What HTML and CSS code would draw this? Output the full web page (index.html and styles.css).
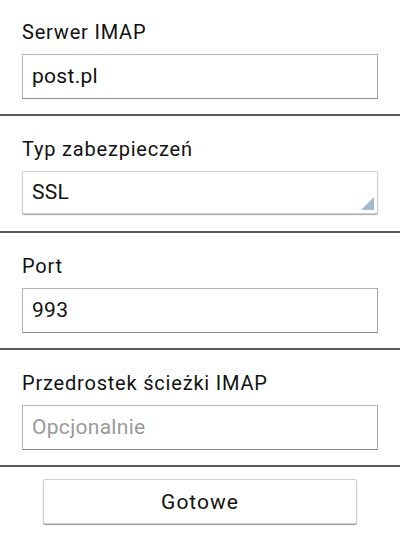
FILE: index.html
```html
<!DOCTYPE html>
<html lang="pl">
<head>
<meta charset="utf-8">
<link rel="stylesheet" href="styles.css">
</head>
<body>
<div class="form">
  <section class="field first">
    <div class="label">Serwer IMAP</div>
    <div class="input">post.pl</div>
  </section>
  <section class="field">
    <div class="label">Typ zabezpieczeń</div>
    <div class="input spinner">SSL<span class="corner"></span></div>
  </section>
  <section class="field">
    <div class="label">Port</div>
    <div class="input">993</div>
  </section>
  <section class="field">
    <div class="label">Przedrostek ścieżki IMAP</div>
    <div class="input placeholder">Opcjonalnie</div>
  </section>
  <div class="actions">
    <button class="btn">Gotowe</button>
  </div>
</div>
</body>
</html>
```
FILE: styles.css
```css
html, body {
  margin: 0;
  padding: 0;
  background: #ffffff;
}
body {
  width: 400px;
  height: 536px;
  overflow: hidden;
  font-family: Roboto, "Noto Sans", sans-serif;
  color: #111111;
}
.field {
  padding: 22px 22px 15px 22px;
  border-bottom: 2px solid #5a5a5a;
  display: flex;
  flex-direction: column;
  gap: 11px;
}
.field.first {
  padding-top: 21px;
}
.label {
  font-size: 20px;
  line-height: 22px;
  letter-spacing: 0.8px;
}
.input {
  position: relative;
  box-sizing: border-box;
  height: 45px;
  border: 1px solid #b4b4b4;
  border-bottom-color: #8c8c8c;
  border-right-color: #a8a8a8;
  background: #ffffff;
  padding: 0 9px;
  font-size: 21px;
  letter-spacing: 0.3px;
  line-height: 43px;
  color: #111111;
}
.spinner {
  height: 43px;
  line-height: 41px;
  border: 1px solid #d0d0d0;
  border-radius: 2px;
  box-shadow: 0 1px 1px rgba(0,0,0,0.35);
  margin-bottom: 2px;
}
.corner {
  position: absolute;
  right: 3px;
  bottom: 3px;
  width: 0;
  height: 0;
  border-style: solid;
  border-width: 0 0 13px 13px;
  border-color: transparent transparent #a7b8c9 transparent;
}
.placeholder {
  color: #9a9a9a;
}
.actions {
  display: flex;
  justify-content: center;
  padding-top: 12px;
}
.btn {
  box-sizing: border-box;
  width: 314px;
  height: 45px;
  border: 1px solid #cfcfcf;
  border-radius: 2px;
  background: #ffffff;
  box-shadow: 0 1px 1px rgba(0,0,0,0.4);
  font-family: Roboto, "Noto Sans", sans-serif;
  font-size: 21px;
  letter-spacing: 1px;
  color: #111111;
  padding: 0;
}
```
